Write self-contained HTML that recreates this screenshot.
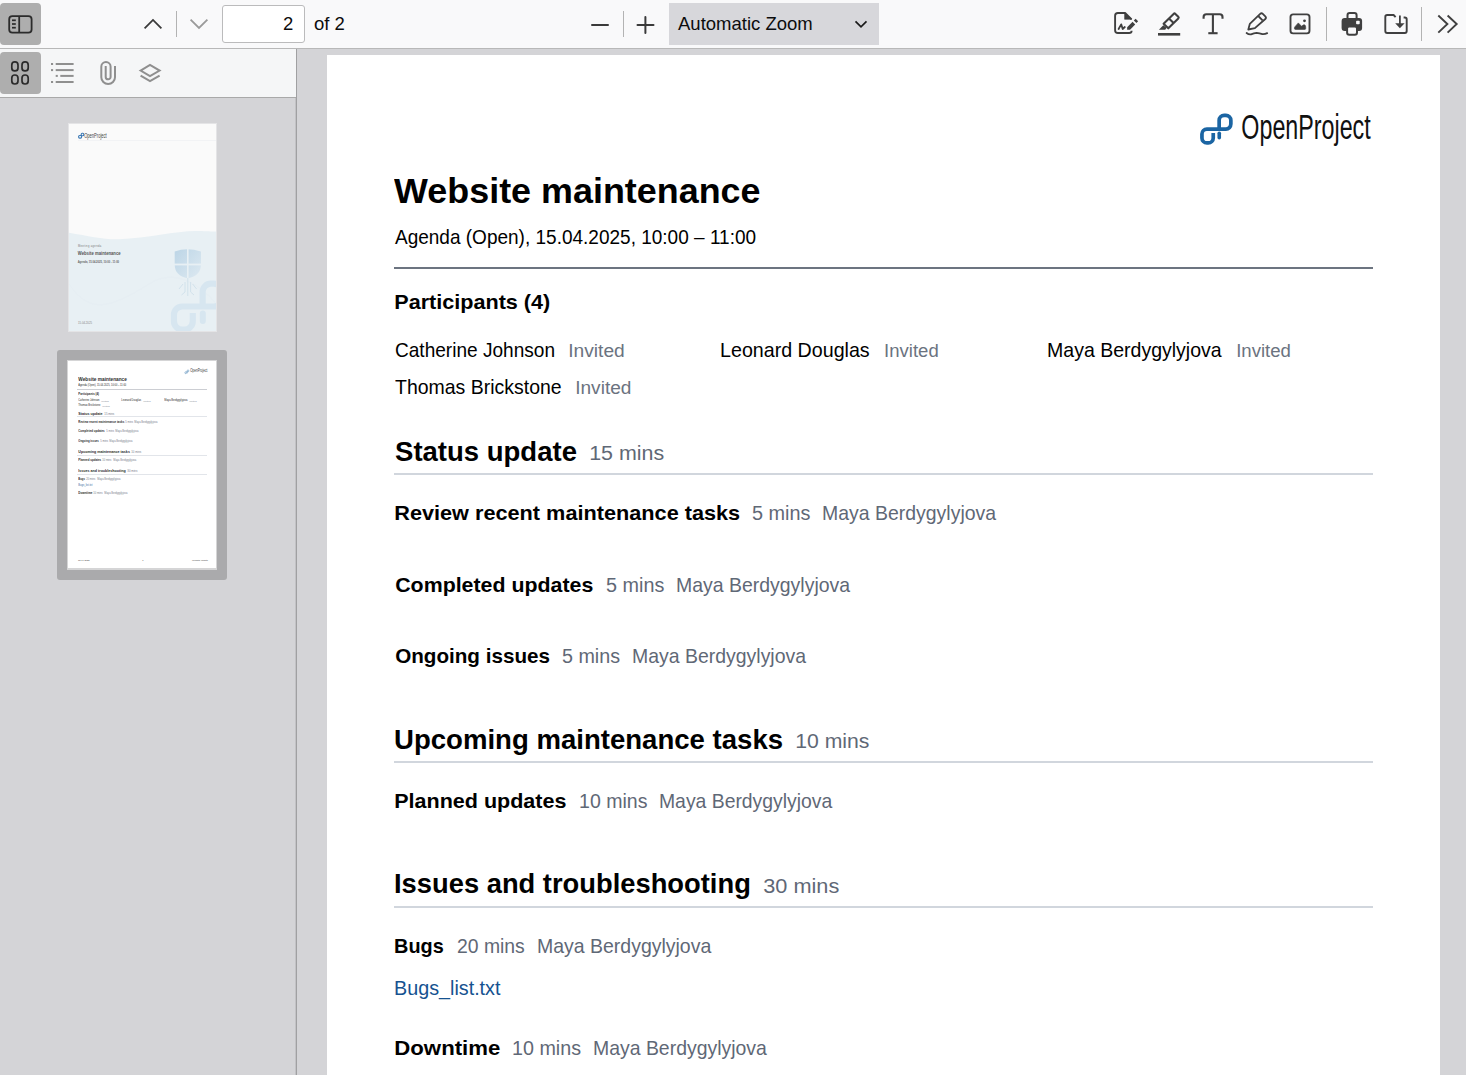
<!DOCTYPE html>
<html><head><meta charset="utf-8">
<style>
*{margin:0;padding:0;box-sizing:border-box}
html,body{width:1466px;height:1075px;overflow:hidden;background:#d4d4d7;font-family:"Liberation Sans",sans-serif}
.abs{position:absolute}
#toolbar{position:absolute;left:0;top:0;width:1466px;height:49px;background:#f9f9fa;border-bottom:1px solid #b8b8b8}
#sbtool{position:absolute;left:0;top:49px;width:296px;height:49px;background:#f5f6f7;border-bottom:1px solid #a9a9a9}
#sbline{position:absolute;left:296px;top:98px;width:1px;height:977px;background:#a0a0a2;box-shadow:-1px 0 0 #c2c2c5}
#sbline2{position:absolute;left:296px;top:49px;width:1px;height:49px;background:#a0a0a2}
.btnT{position:absolute;background:#aeaeae;border-radius:4px}
.sep{position:absolute;width:1px;background:#b3b3b3}
.page{position:absolute;left:327px;top:55px;width:1113px;height:1100px;background:#fff}
.t{position:absolute;white-space:nowrap;line-height:1;transform-origin:0 0;padding:6px 2px;margin:-6px 0 0 -2px}
.rule{position:absolute;left:394px;width:979px;height:2px;background:#d1d6dd}
svg{position:absolute;overflow:visible}
.thumbinner .rule{display:none}
</style></head><body>
<div id="toolbar"></div>
<div class="btnT" style="left:0;top:3px;width:41px;height:42px"></div>
<div class="sep" style="left:176px;top:11px;height:26px"></div>
<div class="abs" style="left:222px;top:5px;width:83px;height:38px;background:#fff;border:1px solid #bbbbbc;border-radius:3px"></div>
<div class="t" style="left:283px;top:15px;font-size:18.5px;color:#0c0c0d">2</div>
<div class="t" style="left:314px;top:15px;font-size:18.5px;color:#0c0c0d">of 2</div>
<div class="sep" style="left:623px;top:11px;height:26px"></div>
<div class="abs" style="left:669px;top:3px;width:210px;height:42px;background:#d7d7db"></div>
<div class="t" style="left:678px;top:15px;font-size:18.5px;color:#0c0c0d">Automatic Zoom</div>
<div class="sep" style="left:1326px;top:7px;height:34px"></div>
<div class="sep" style="left:1421px;top:7px;height:34px"></div>
<svg style="left:0;top:0" width="1466" height="48" viewBox="0 0 1466 48">
 <g fill="none" stroke="#2b2b2b" stroke-width="1.8">
  <rect x="9.2" y="16.1" width="22.4" height="16.6" rx="3.2"/>
  <line x1="19.2" y1="16" x2="19.2" y2="32.6"/>
 </g>
 <g stroke="#2b2b2b" stroke-width="1.7">
  <line x1="12" y1="20.3" x2="15.8" y2="20.3"/><line x1="12" y1="24" x2="15.8" y2="24"/><line x1="12" y1="27.7" x2="15.8" y2="27.7"/>
 </g>
 <polyline points="144.6,28.3 153,19.9 161.4,28.3" fill="none" stroke="#3a3a3a" stroke-width="1.8"/>
 <polyline points="190.6,19.6 199,28 207.4,19.6" fill="none" stroke="#9a9a9a" stroke-width="1.8"/>
 <g stroke="#3a3a3a" stroke-width="2" fill="none" stroke-linecap="round">
  <line x1="592" y1="25" x2="608" y2="25"/>
  <line x1="637.5" y1="25" x2="653.5" y2="25"/><line x1="645.4" y1="17" x2="645.4" y2="33"/>
 </g>
 <polyline points="855.5,21.3 861,26.8 866.5,21.3" fill="none" stroke="#1a1a1a" stroke-width="1.7"/>
 <!-- signature -->
 <path d="M1131.6,30.8 V31 Q1131.6,33 1129.1,33 H1117.9 Q1115.1,33 1115.1,30.2 V15.8 Q1115.1,13 1117.9,13 H1125.1 L1131.6,19.4" fill="none" stroke="#404040" stroke-width="1.9" stroke-linejoin="round"/>
 <path d="M1124.6,13.2 V19.3 H1131.6 Z" fill="#404040" stroke="#404040" stroke-width="0.6" stroke-linejoin="round"/>
 <path d="M1127.1,27.2 L1132.6,21.8 L1135.2,24.4 L1130,29.7 H1127.1 Z" fill="#404040"/>
 <path d="M1133.8,20.5 L1135.6,18.8 L1138.1,21.3 L1136.4,23.1 Z" fill="#404040"/>
 <path d="M1118.6,29 L1121.2,24.4 L1122.7,29 L1124.8,27" fill="none" stroke="#404040" stroke-width="1.8" stroke-linejoin="round" stroke-linecap="round"/>
 <!-- highlight -->
 <g fill="none" stroke="#404040" stroke-width="2.1" stroke-linejoin="round">
  <path d="M1163.6,23.7 L1173.6,13.9 Q1174.5,13 1175.4,13.9 L1178.3,16.8 Q1179.1,17.6 1178.3,18.4 L1168.3,28.3 Z"/>
  <line x1="1169" y1="18.4" x2="1173.6" y2="22.9"/>
 </g>
 <path d="M1158.9,29.8 L1163.3,25.2 L1166.6,27.8 L1165.2,29.8 Z" fill="#404040"/>
 <rect x="1158" y="33" width="22.2" height="2.6" fill="#404040"/>
 <!-- T -->
 <g fill="none" stroke="#404040" stroke-width="2.1">
  <path d="M1203.6,18.8 V17 Q1203.6,14.3 1206.3,14.3 H1219.8 Q1222.5,14.3 1222.5,17 V18.8"/>
  <line x1="1212.9" y1="14.3" x2="1212.9" y2="33.4"/>
  <line x1="1208.3" y1="33.2" x2="1217.6" y2="33.2"/>
 </g>
 <!-- ink pencil -->
 <g fill="none" stroke="#404040" stroke-width="1.8" stroke-linejoin="round">
  <path d="M1248.3,29.5 L1249.8,23.9 L1260.2,13.9 Q1261.5,12.6 1262.8,13.9 L1265.3,16.4 Q1266.6,17.7 1265.3,19 L1254.9,28.2 Z"/>
  <line x1="1258.2" y1="16" x2="1262.6" y2="20.4"/>
 </g>
 <path d="M1246.6,33 Q1248.8,34.8 1251,34.4 Q1254,33.2 1256.6,32.8 Q1259.5,33.2 1262.4,34.1 Q1265,34.3 1267.2,33.1" fill="none" stroke="#404040" stroke-width="1.8" stroke-linecap="round"/>
 <!-- image -->
 <rect x="1290.5" y="14.4" width="19" height="19" rx="2.6" fill="none" stroke="#404040" stroke-width="1.9"/>
 <path d="M1294.4,28.2 Q1294.4,27.2 1295.2,26.4 L1298.3,22.9 L1301.6,26.3 L1303.2,25 Q1304.1,24.3 1305,25.1 Q1305.7,25.8 1305.7,27.2 V28.6 Q1305.7,29.4 1304.9,29.4 H1295.4 Q1294.4,29.4 1294.4,28.2 Z" fill="#404040" stroke="#404040" stroke-width="0.6" stroke-linejoin="round"/>
 <circle cx="1304.5" cy="20.8" r="1.4" fill="#404040"/>
 <!-- print -->
 <rect x="1347.5" y="13.1" width="9.1" height="7" rx="2.2" fill="none" stroke="#404040" stroke-width="2"/>
 <rect x="1341.6" y="18.1" width="20.5" height="12.8" rx="3" fill="#404040"/>
 <rect x="1356.1" y="20.8" width="3.6" height="3.5" rx="0.8" fill="#f9f9fa"/>
 <rect x="1347.1" y="26.4" width="9.9" height="8.3" rx="2.2" fill="#f9f9fa" stroke="#404040" stroke-width="2"/>
 <!-- download -->
 <path d="M1395.6,17.2 L1393.6,15 H1387.2 Q1385.3,15 1385.3,16.9 V31.1 Q1385.3,33 1387.2,33 H1404.8 Q1406.7,33 1406.7,31.1 V19.4 Q1406.7,17.5 1404.8,17.5 H1403.6" fill="none" stroke="#404040" stroke-width="1.9" stroke-linejoin="round"/>
 <line x1="1399.9" y1="15.6" x2="1399.9" y2="24" stroke="#404040" stroke-width="1.8"/>
 <path d="M1395.2,23.2 H1404.6 L1399.9,28.2 Z" fill="#404040"/>
 <!-- >> -->
 <g fill="none" stroke="#404040" stroke-width="1.9">
  <polyline points="1438.3,15.5 1447.4,24 1438.3,32.6"/>
  <polyline points="1447.6,15.5 1456.7,24 1447.6,32.6"/>
 </g>
</svg>


<div id="sbtool"></div>
<div class="btnT" style="left:0;top:52px;width:41px;height:42px"></div>
<svg style="left:0;top:49px" width="296" height="48" viewBox="0 49 296 48">
 <g fill="none" stroke="#2b2b2b" stroke-width="1.7">
  <rect x="11.8" y="61.9" width="6.2" height="9" rx="3"/>
  <rect x="22" y="61.9" width="6.2" height="9" rx="3"/>
  <rect x="11.8" y="75" width="6.2" height="9" rx="3"/>
  <rect x="22" y="75" width="6.2" height="9" rx="3"/>
 </g>
 <g fill="#8f8f8f">
  <rect x="51" y="63" width="2.1" height="2"/><rect x="55.7" y="63" width="17.9" height="2"/>
  <rect x="51" y="69.1" width="2.1" height="2"/><rect x="55.7" y="69.1" width="17.9" height="2"/>
  <rect x="55.7" y="74.9" width="2.1" height="2"/><rect x="60.3" y="74.9" width="13.3" height="2"/>
  <rect x="51" y="81" width="2.1" height="2"/><rect x="55.7" y="81" width="17.9" height="2"/>
 </g>
 <path d="M115,66.1 V77.2 A6.85,6.85 0 0 1 101.3,77.2 V66.7 A4.65,4.65 0 0 1 110.6,66.7 V76.9 A2.45,2.45 0 0 1 105.7,76.9 V66.1" fill="none" stroke="#8f8f8f" stroke-width="2"/>
 <g fill="none" stroke="#8f8f8f" stroke-width="2" stroke-linejoin="miter">
  <polygon points="140.6,70.6 150,65 159.6,70.6 150,76.2"/>
  <polyline points="140.6,75.6 150,81.2 159.6,75.6"/>
 </g>
</svg>

<div id="sbline"></div><div id="sbline2"></div>
<div class="abs" style="left:68px;top:123px;width:149px;height:209px;background:#e4e4e6"></div>
<svg style="left:69px;top:124px;overflow:hidden" width="147" height="207" viewBox="0 0 147 207">
 <defs>
  <linearGradient id="sh" x1="0" y1="0" x2="1" y2="1"><stop offset="0" stop-color="#bcd5e6"/><stop offset="1" stop-color="#dde9f1"/></linearGradient>
 </defs>
 <rect x="0" y="0" width="147" height="207" fill="#fafafa"/>
 <path d="M0,108.7 C20,112 35,115.7 50,115.2 C80,114 110,106 130,107 C138,107.3 143,107.5 147,107.5 V207 H0 Z" fill="#e8f0f4"/>
 <path d="M0,160 C20,190 40,185 80,160 C110,140 140,170 147,180" fill="none" stroke="#e6eef3" stroke-width="1"/>
 <!-- logo -->
 <g fill="none" stroke="#3d7ab5" stroke-width="1.1">
  <rect x="9.6" y="11.5" width="3" height="2.6" rx="1"/>
  <rect x="12.2" y="9.2" width="2.6" height="2.5" rx="1"/>
 </g>
 
 <rect x="9" y="16.3" width="138" height="0.6" fill="#eceff2"/>
 <!-- text -->
 
 
 
 
 <!-- shield -->
 <path d="M105.7,127.6 Q118,123 131.9,127.6 V140.6 Q131.9,152 118.8,154.2 Q105.7,152 105.7,140.6 Z" fill="url(#sh)"/>
 <rect x="118" y="125" width="1.6" height="31" fill="#e8f0f4"/>
 <rect x="104" y="139.6" width="29" height="1.8" fill="#e8f0f4"/>
 <g stroke="#cfe0ea" stroke-width="0.9" fill="none">
  <path d="M118.8,154 V172"/><path d="M116,158 V168 L112.5,171"/><path d="M121.6,158 V168 L125,171"/><path d="M114,160 L110,165"/><path d="M123.6,160 L127.6,165"/>
 </g>
 <!-- big chain -->
 <g transform="translate(101.7,156.6) scale(1.667,1.667) translate(-1200,-113.5)">
 <path d="M1213.25,133 V137.9 A4.95,4.95 0 0 1 1208.3,142.85 H1206.9 A4.95,4.95 0 0 1 1201.95,137.9 V134 A4.95,4.95 0 0 1 1206.9,129.05 H1225.9 A4.95,4.95 0 0 0 1230.85,124.1 V120.3 A4.95,4.95 0 0 0 1225.9,115.35 H1224.1 A4.95,4.95 0 0 0 1219.15,120.3 V129.05" fill="none" stroke="#d7e6f0" stroke-width="3.7"/>
 <path d="M1219.25,133.2 V137.7" fill="none" stroke="#d7e6f0" stroke-width="3.6" stroke-linecap="round"/>
 </g>
</svg>
<div class="t" style="left:85px;top:131.6px;font-size:7px;color:#444;transform:scaleX(0.58)">OpenProject</div>
<div class="t" style="left:78px;top:245.6px;font-size:2.6px;color:#777;letter-spacing:0.35px">Meeting agenda</div>
<div class="t" style="left:78px;top:251.8px;font-size:4.5px;color:#555;font-weight:bold;transform:scaleX(0.93)">Website maintenance</div>
<div class="t" style="left:78px;top:260.6px;font-size:3.1px;color:#666;font-weight:bold;transform:scaleX(0.85)">Agenda, 15.04.2025, 10:00 - 11:00</div>
<div class="t" style="left:78px;top:321.8px;font-size:2.8px;color:#888">15.04.2025</div>
<div class="abs" style="left:57px;top:350px;width:170px;height:230px;background:#aaaaac;border-radius:3px"></div>
<div class="abs" style="left:67px;top:360px;width:150px;height:210px;background:#d5d5d6"></div>
<div class="abs" style="left:68px;top:361px;width:148px;height:207px;background:#fff;overflow:hidden"><div class="thumbinner" style="opacity:0.85;position:absolute;left:7px;top:8px;width:1466px;height:1700px;zoom:0.13297;margin-left:-327px;margin-top:-55px"><div class="rule" style="top:267px;background:#6c7480"></div>
<div class="rule" style="top:473px"></div>
<div class="rule" style="top:761px"></div>
<div class="rule" style="top:906px"></div>
<svg style="left:1195px;top:108px" width="200" height="45" viewBox="1195 108 200 45">
 <path d="M1213.25,133 V137.9 A4.95,4.95 0 0 1 1208.3,142.85 H1206.9 A4.95,4.95 0 0 1 1201.95,137.9 V134 A4.95,4.95 0 0 1 1206.9,129.05 H1225.9 A4.95,4.95 0 0 0 1230.85,124.1 V120.3 A4.95,4.95 0 0 0 1225.9,115.35 H1224.1 A4.95,4.95 0 0 0 1219.15,120.3 V129.05" fill="none" stroke="#1b65a3" stroke-width="3.7"/>
 <path d="M1219.25,133.2 V137.7" fill="none" stroke="#1b65a3" stroke-width="3.6" stroke-linecap="round"/>
</svg>
<div class="t" style="left:1242px;top:108.5px;font-size:35px;color:#111;transform:scaleX(0.665)">OpenProject</div>

<div class="t" style="left:394.20px;top:173.41px;font-size:34.98px;color:#000;transform:scaleX(1.0267);font-weight:bold">Website maintenance</div>
<div class="t" style="left:395.00px;top:227.80px;font-size:19.41px;color:#000;transform:scaleX(0.9795)">Agenda (Open), 15.04.2025, 10:00 – 11:00</div>
<div class="t" style="left:394.00px;top:292.80px;font-size:19.41px;color:#000;transform:scaleX(1.1131);font-weight:bold">Participants (4)</div>
<div class="t" style="left:395.00px;top:340.89px;font-size:19.41px;color:#000;transform:scaleX(0.9825)">Catherine Johnson</div>
<div class="t" style="left:568.40px;top:342.86px;font-size:17.48px;color:#6b7380;transform:scaleX(1.0993)">Invited</div>
<div class="t" style="left:720.40px;top:340.89px;font-size:19.41px;color:#000;transform:scaleX(1.0126)">Leonard Douglas</div>
<div class="t" style="left:884.40px;top:342.86px;font-size:17.48px;color:#6b7380;transform:scaleX(1.0604)">Invited</div>
<div class="t" style="left:1046.60px;top:340.89px;font-size:19.41px;color:#000;transform:scaleX(1.0058)">Maya Berdygylyjova</div>
<div class="t" style="left:1235.60px;top:342.86px;font-size:17.48px;color:#6b7380;transform:scaleX(1.0646)">Invited</div>
<div class="t" style="left:395.00px;top:378.39px;font-size:19.41px;color:#000;transform:scaleX(1.0033)">Thomas Brickstone</div>
<div class="t" style="left:574.80px;top:380.36px;font-size:17.48px;color:#6b7380;transform:scaleX(1.0924)">Invited</div>
<div class="t" style="left:395.00px;top:438.00px;font-size:27.2px;color:#000;transform:scaleX(1.0120);font-weight:bold">Status update</div>
<div class="t" style="left:589.00px;top:444.39px;font-size:19.41px;color:#5f6876;transform:scaleX(1.1040)">15 mins</div>
<div class="t" style="left:394.00px;top:503.79px;font-size:19.41px;color:#000;transform:scaleX(1.1175);font-weight:bold">Review recent maintenance tasks</div>
<div class="t" style="left:751.60px;top:503.79px;font-size:19.41px;color:#5f6876;transform:scaleX(1.0224)">5 mins</div>
<div class="t" style="left:822.00px;top:503.79px;font-size:19.41px;color:#5f6876;transform:scaleX(1.0024)">Maya Berdygylyjova</div>
<div class="t" style="left:395.00px;top:575.70px;font-size:19.41px;color:#000;transform:scaleX(1.1000);font-weight:bold">Completed updates</div>
<div class="t" style="left:605.80px;top:575.70px;font-size:19.41px;color:#5f6876;transform:scaleX(1.0189)">5 mins</div>
<div class="t" style="left:676.00px;top:575.70px;font-size:19.41px;color:#5f6876;transform:scaleX(1.0024)">Maya Berdygylyjova</div>
<div class="t" style="left:395.00px;top:647.29px;font-size:19.41px;color:#000;transform:scaleX(1.0639);font-weight:bold">Ongoing issues</div>
<div class="t" style="left:562.00px;top:647.29px;font-size:19.41px;color:#5f6876;transform:scaleX(1.0152)">5 mins</div>
<div class="t" style="left:632.00px;top:647.29px;font-size:19.41px;color:#5f6876;transform:scaleX(1.0023)">Maya Berdygylyjova</div>
<div class="t" style="left:394.00px;top:726.00px;font-size:27.2px;color:#000;transform:scaleX(1.0137);font-weight:bold">Upcoming maintenance tasks</div>
<div class="t" style="left:795.00px;top:732.39px;font-size:19.41px;color:#5f6876;transform:scaleX(1.0923)">10 mins</div>
<div class="t" style="left:394.00px;top:791.79px;font-size:19.41px;color:#000;transform:scaleX(1.1092);font-weight:bold">Planned updates</div>
<div class="t" style="left:578.60px;top:791.79px;font-size:19.41px;color:#5f6876;transform:scaleX(1.0070)">10 mins</div>
<div class="t" style="left:659.00px;top:791.79px;font-size:19.41px;color:#5f6876;transform:scaleX(0.9977)">Maya Berdygylyjova</div>
<div class="t" style="left:394.00px;top:870.20px;font-size:27.2px;color:#000;transform:scaleX(1.0052);font-weight:bold">Issues and troubleshooting</div>
<div class="t" style="left:763.20px;top:876.60px;font-size:19.41px;color:#5f6876;transform:scaleX(1.1190)">30 mins</div>
<div class="t" style="left:394.00px;top:937.00px;font-size:19.41px;color:#000;transform:scaleX(1.0230);font-weight:bold">Bugs</div>
<div class="t" style="left:457.00px;top:937.00px;font-size:19.41px;color:#5f6876;transform:scaleX(0.9979)">20 mins</div>
<div class="t" style="left:536.60px;top:937.00px;font-size:19.41px;color:#5f6876;transform:scaleX(1.0035)">Maya Berdygylyjova</div>
<div class="t" style="left:394.00px;top:978.79px;font-size:19.41px;color:#155290;transform:scaleX(1.0173)">Bugs_list.txt</div>
<div class="t" style="left:394.00px;top:1039.00px;font-size:19.41px;color:#000;transform:scaleX(1.1436);font-weight:bold">Downtime</div>
<div class="t" style="left:512.00px;top:1039.00px;font-size:19.41px;color:#5f6876;transform:scaleX(1.0157)">10 mins</div>
<div class="t" style="left:593.00px;top:1039.00px;font-size:19.41px;color:#5f6876;transform:scaleX(1.0012)">Maya Berdygylyjova</div><div class="t" style="left:395px;top:1537px;font-size:17.5px;color:#222">15.04.2025</div>
<div class="t" style="left:878px;top:1537px;font-size:17.5px;color:#222">1</div>
<div class="t" style="left:1253px;top:1537px;font-size:17.5px;color:#222">Website update</div>
</div></div>

<div class="abs" style="left:77px;top:389px;width:130px;height:1px;background:rgba(108,116,128,0.35)"></div>
<div class="abs" style="left:77px;top:416px;width:130px;height:1px;background:rgba(190,198,208,0.45)"></div>
<div class="abs" style="left:77px;top:455px;width:130px;height:1px;background:rgba(190,198,208,0.45)"></div>
<div class="abs" style="left:77px;top:474px;width:130px;height:1px;background:rgba(190,198,208,0.45)"></div>


<div class="page"></div>
<div class="rule" style="top:267px;background:#6c7480"></div>
<div class="rule" style="top:473px"></div>
<div class="rule" style="top:761px"></div>
<div class="rule" style="top:906px"></div>
<svg style="left:1195px;top:108px" width="200" height="45" viewBox="1195 108 200 45">
 <path d="M1213.25,133 V137.9 A4.95,4.95 0 0 1 1208.3,142.85 H1206.9 A4.95,4.95 0 0 1 1201.95,137.9 V134 A4.95,4.95 0 0 1 1206.9,129.05 H1225.9 A4.95,4.95 0 0 0 1230.85,124.1 V120.3 A4.95,4.95 0 0 0 1225.9,115.35 H1224.1 A4.95,4.95 0 0 0 1219.15,120.3 V129.05" fill="none" stroke="#1b65a3" stroke-width="3.7"/>
 <path d="M1219.25,133.2 V137.7" fill="none" stroke="#1b65a3" stroke-width="3.6" stroke-linecap="round"/>
</svg>
<div class="t" style="left:1242px;top:108.5px;font-size:35px;color:#111;transform:scaleX(0.665)">OpenProject</div>

<div class="t" style="left:394.20px;top:173.41px;font-size:34.98px;color:#000;transform:scaleX(1.0267);font-weight:bold">Website maintenance</div>
<div class="t" style="left:395.00px;top:227.80px;font-size:19.41px;color:#000;transform:scaleX(0.9795)">Agenda (Open), 15.04.2025, 10:00 – 11:00</div>
<div class="t" style="left:394.00px;top:292.80px;font-size:19.41px;color:#000;transform:scaleX(1.1131);font-weight:bold">Participants (4)</div>
<div class="t" style="left:395.00px;top:340.89px;font-size:19.41px;color:#000;transform:scaleX(0.9825)">Catherine Johnson</div>
<div class="t" style="left:568.40px;top:342.86px;font-size:17.48px;color:#6b7380;transform:scaleX(1.0993)">Invited</div>
<div class="t" style="left:720.40px;top:340.89px;font-size:19.41px;color:#000;transform:scaleX(1.0126)">Leonard Douglas</div>
<div class="t" style="left:884.40px;top:342.86px;font-size:17.48px;color:#6b7380;transform:scaleX(1.0604)">Invited</div>
<div class="t" style="left:1046.60px;top:340.89px;font-size:19.41px;color:#000;transform:scaleX(1.0058)">Maya Berdygylyjova</div>
<div class="t" style="left:1235.60px;top:342.86px;font-size:17.48px;color:#6b7380;transform:scaleX(1.0646)">Invited</div>
<div class="t" style="left:395.00px;top:378.39px;font-size:19.41px;color:#000;transform:scaleX(1.0033)">Thomas Brickstone</div>
<div class="t" style="left:574.80px;top:380.36px;font-size:17.48px;color:#6b7380;transform:scaleX(1.0924)">Invited</div>
<div class="t" style="left:395.00px;top:438.00px;font-size:27.2px;color:#000;transform:scaleX(1.0120);font-weight:bold">Status update</div>
<div class="t" style="left:589.00px;top:444.39px;font-size:19.41px;color:#5f6876;transform:scaleX(1.1040)">15 mins</div>
<div class="t" style="left:394.00px;top:503.79px;font-size:19.41px;color:#000;transform:scaleX(1.1175);font-weight:bold">Review recent maintenance tasks</div>
<div class="t" style="left:751.60px;top:503.79px;font-size:19.41px;color:#5f6876;transform:scaleX(1.0224)">5 mins</div>
<div class="t" style="left:822.00px;top:503.79px;font-size:19.41px;color:#5f6876;transform:scaleX(1.0024)">Maya Berdygylyjova</div>
<div class="t" style="left:395.00px;top:575.70px;font-size:19.41px;color:#000;transform:scaleX(1.1000);font-weight:bold">Completed updates</div>
<div class="t" style="left:605.80px;top:575.70px;font-size:19.41px;color:#5f6876;transform:scaleX(1.0189)">5 mins</div>
<div class="t" style="left:676.00px;top:575.70px;font-size:19.41px;color:#5f6876;transform:scaleX(1.0024)">Maya Berdygylyjova</div>
<div class="t" style="left:395.00px;top:647.29px;font-size:19.41px;color:#000;transform:scaleX(1.0639);font-weight:bold">Ongoing issues</div>
<div class="t" style="left:562.00px;top:647.29px;font-size:19.41px;color:#5f6876;transform:scaleX(1.0152)">5 mins</div>
<div class="t" style="left:632.00px;top:647.29px;font-size:19.41px;color:#5f6876;transform:scaleX(1.0023)">Maya Berdygylyjova</div>
<div class="t" style="left:394.00px;top:726.00px;font-size:27.2px;color:#000;transform:scaleX(1.0137);font-weight:bold">Upcoming maintenance tasks</div>
<div class="t" style="left:795.00px;top:732.39px;font-size:19.41px;color:#5f6876;transform:scaleX(1.0923)">10 mins</div>
<div class="t" style="left:394.00px;top:791.79px;font-size:19.41px;color:#000;transform:scaleX(1.1092);font-weight:bold">Planned updates</div>
<div class="t" style="left:578.60px;top:791.79px;font-size:19.41px;color:#5f6876;transform:scaleX(1.0070)">10 mins</div>
<div class="t" style="left:659.00px;top:791.79px;font-size:19.41px;color:#5f6876;transform:scaleX(0.9977)">Maya Berdygylyjova</div>
<div class="t" style="left:394.00px;top:870.20px;font-size:27.2px;color:#000;transform:scaleX(1.0052);font-weight:bold">Issues and troubleshooting</div>
<div class="t" style="left:763.20px;top:876.60px;font-size:19.41px;color:#5f6876;transform:scaleX(1.1190)">30 mins</div>
<div class="t" style="left:394.00px;top:937.00px;font-size:19.41px;color:#000;transform:scaleX(1.0230);font-weight:bold">Bugs</div>
<div class="t" style="left:457.00px;top:937.00px;font-size:19.41px;color:#5f6876;transform:scaleX(0.9979)">20 mins</div>
<div class="t" style="left:536.60px;top:937.00px;font-size:19.41px;color:#5f6876;transform:scaleX(1.0035)">Maya Berdygylyjova</div>
<div class="t" style="left:394.00px;top:978.79px;font-size:19.41px;color:#155290;transform:scaleX(1.0173)">Bugs_list.txt</div>
<div class="t" style="left:394.00px;top:1039.00px;font-size:19.41px;color:#000;transform:scaleX(1.1436);font-weight:bold">Downtime</div>
<div class="t" style="left:512.00px;top:1039.00px;font-size:19.41px;color:#5f6876;transform:scaleX(1.0157)">10 mins</div>
<div class="t" style="left:593.00px;top:1039.00px;font-size:19.41px;color:#5f6876;transform:scaleX(1.0012)">Maya Berdygylyjova</div>
</body></html>
